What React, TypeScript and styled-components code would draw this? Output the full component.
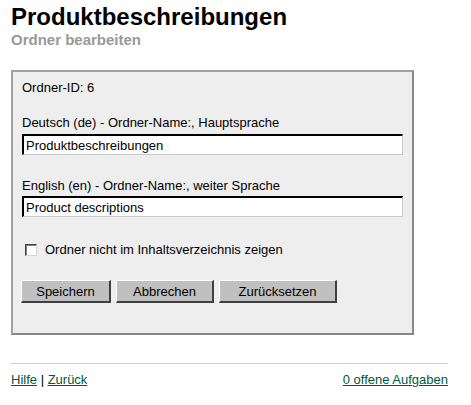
import React from "react";
import styled, { createGlobalStyle } from "styled-components";

const Global = createGlobalStyle`
  html, body { margin: 0; padding: 0; background: #fff; }
  body { font-family: "Liberation Sans", Arial, sans-serif; color: #000; }
`;

const Page = styled.div`
  width: 437px;
  padding: 3px 0 0 11px;
  display: flex;
  flex-direction: column;
`;

const Title = styled.h1`
  margin: 0;
  font-size: 24px;
  line-height: 28px;
  font-weight: bold;
  color: #000;
`;

const Subtitle = styled.h2`
  margin: 0;
  font-size: 15px;
  line-height: 18px;
  font-weight: bold;
  color: #999;
`;

const Panel = styled.form`
  margin-top: 21px;
  width: 403px;
  box-sizing: border-box;
  background: #eeeeee;
  border: 2px solid;
  border-color: #a0a0a0 #888 #888 #a0a0a0;
  padding: 8px 9px 30px 9px;
  display: flex;
  flex-direction: column;
`;

const Text = styled.div<{ $top?: number }>`
  font-size: 13px;
  line-height: 16px;
  margin-top: ${(p) => p.$top ?? 0}px;
`;

const Field = styled.input<{ $top: number }>`
  margin-top: ${(p) => p.$top}px;
  width: 381px;
  height: 21px;
  box-sizing: border-box;
  border-style: solid;
  border-width: 2px 1px 1px 2px;
  border-color: #000 #c8c8c8 #c8c8c8 #000;
  background: #fff;
  font-family: "Liberation Sans", Arial, sans-serif;
  font-size: 13px;
  padding: 0 2px;
  outline: none;
`;

const CheckRow = styled.label`
  margin-top: 25px;
  display: flex;
  align-items: center;
  gap: 8px;
  font-size: 13px;
  line-height: 16px;
  padding-left: 3px;
`;

const Box = styled.input`
  appearance: none;
  margin: 0;
  width: 12px;
  height: 12px;
  box-sizing: border-box;
  border-style: solid;
  border-width: 1px;
  border-color: #404040 #d4d4d4 #d4d4d4 #404040;
  box-shadow: inset 1px 1px 0 #808080;
  background: #fff;
`;

const Buttons = styled.div`
  margin-top: 22px;
  display: flex;
  gap: 5px;
  margin-left: -1px;
`;

const Button = styled.button<{ $w: number }>`
  width: ${(p) => p.$w}px;
  height: 23px;
  box-sizing: border-box;
  background: #c0c0c0;
  border-style: solid;
  border-width: 1px 2px 2px 1px;
  border-color: #fff #404040 #404040 #fff;
  font-family: "Liberation Sans", Arial, sans-serif;
  font-size: 13px;
  color: #000;
  padding: 0;
`;

const Rule = styled.hr`
  margin: 28px 0 0 0;
  border: none;
  border-top: 1px solid #ccc;
  height: 0;
  width: 437px;
`;

const Footer = styled.div`
  margin-top: 8px;
  display: flex;
  justify-content: space-between;
  font-size: 13px;
  line-height: 16px;
`;

const Link = styled.a`
  color: #005a3c;
  text-decoration: underline;
`;

export default function App() {
  return (
    <>
      <Global />
      <Page>
        <Title>Produktbeschreibungen</Title>
        <Subtitle>Ordner bearbeiten</Subtitle>
        <Panel onSubmit={(e) => e.preventDefault()}>
          <Text>Ordner-ID: 6</Text>
          <Text $top={19}>Deutsch (de) - Ordner-Name:, Hauptsprache</Text>
          <Field $top={3} defaultValue="Produktbeschreibungen" />
          <Text $top={23}>English (en) - Ordner-Name:, weiter Sprache</Text>
          <Field $top={2} defaultValue="Product descriptions" />
          <CheckRow>
            <Box type="checkbox" />
            Ordner nicht im Inhaltsverzeichnis zeigen
          </CheckRow>
          <Buttons>
            <Button $w={90}>Speichern</Button>
            <Button $w={98}>Abbrechen</Button>
            <Button $w={118}>Zurücksetzen</Button>
          </Buttons>
        </Panel>
        <Rule />
        <Footer>
          <span>
            <Link href="#">Hilfe</Link> | <Link href="#">Zurück</Link>
          </span>
          <Link href="#">0 offene Aufgaben</Link>
        </Footer>
      </Page>
    </>
  );
}
